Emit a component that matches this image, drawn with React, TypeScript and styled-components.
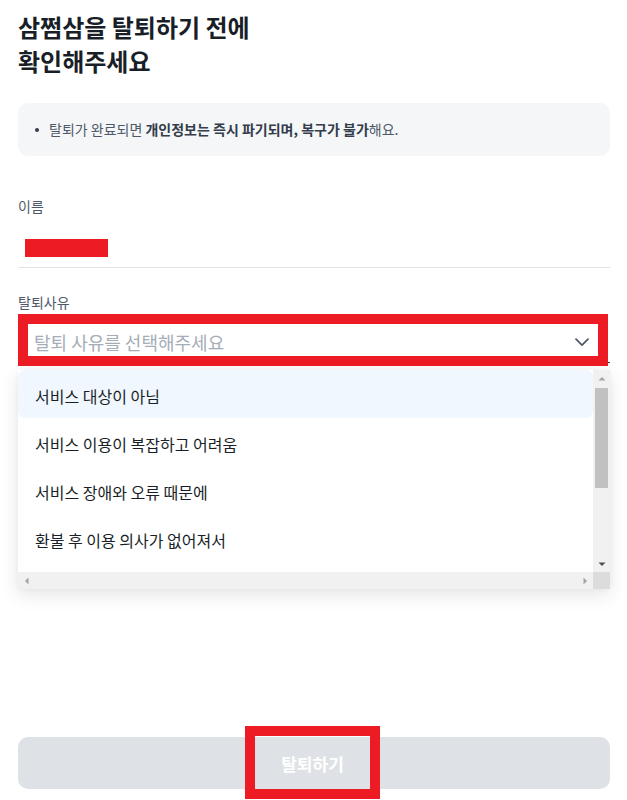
import React from "react";
import styled, { createGlobalStyle } from "styled-components";

const GlobalStyle = createGlobalStyle`
  * { box-sizing: border-box; }
  html, body { margin: 0; padding: 0; background: #ffffff; }
  body {
    font-family: "Noto Sans CJK KR", "Noto Sans", sans-serif;
    color: #191f28;
  }
`;

const Page = styled.div`
  min-height: 800px;
  display: flex;
  flex-direction: column;
  padding: 10px 17px 11px 18px;
`;

const Title = styled.h1`
  margin: 0;
  font-size: 24px;
  line-height: 34px;
  font-weight: 700;
  color: #191f28;
`;

const InfoBox = styled.div`
  margin-top: 25px;
  background: #f5f6f8;
  border-radius: 10px;
  padding: 16px 17px;
  display: flex;
  align-items: center;
  gap: 10px;
`;

const Dot = styled.span`
  width: 4px;
  height: 4px;
  border-radius: 50%;
  background: #333d4b;
  flex: none;
`;

const InfoText = styled.p`
  margin: 0;
  font-size: 14px;
  line-height: 21px;
  color: #4e5968;
  b { font-weight: 700; color: #333d4b; }
`;

const Label = styled.div<{ $gap: number }>`
  margin-top: ${(p) => p.$gap}px;
  font-size: 14px;
  line-height: 18px;
  color: #4e5968;
`;

const ValueRow = styled.div`
  margin-top: 13px;
  height: 40px;
  display: flex;
  align-items: center;
  padding-left: 7px;
  border-bottom: 1px solid #e1e3e6;
`;

const Redaction = styled.span`
  display: block;
  width: 83px;
  height: 18px;
  background: #ed1c24;
`;

const SelectField = styled.div`
  position: relative;
  margin-top: 3px;
`;

const SelectButton = styled.div`
  height: 49px;
  padding: 8px 21px 0 16px;
  display: flex;
  align-items: center;
  justify-content: space-between;
  border-bottom: 1px solid #333d4b;
`;

const Placeholder = styled.span`
  font-size: 18px;
  color: #a5adb7;
`;

const Annotation = styled.div<{ $l: number; $t: number; $w: number; $h: number }>`
  position: absolute;
  left: ${(p) => p.$l}px;
  top: ${(p) => p.$t}px;
  width: ${(p) => p.$w}px;
  height: ${(p) => p.$h}px;
  border: 10px solid #ed1c24;
  pointer-events: none;
`;

const Menu = styled.div`
  position: absolute;
  left: 0;
  right: 0;
  top: 56px;
  height: 219px;
  display: grid;
  grid-template-columns: 1fr 17px;
  grid-template-rows: 1fr 17px;
  background: #ffffff;
  box-shadow: 0 6px 18px rgba(0, 0, 0, 0.1), 0 0 6px rgba(0, 0, 0, 0.04);
  z-index: 2;
`;

const OptionList = styled.ul`
  margin: 0;
  padding: 0;
  list-style: none;
  overflow: hidden;
`;

const Option = styled.li<{ $active?: boolean }>`
  height: 48px;
  display: flex;
  align-items: center;
  padding: 3px 0 0 17px;
  font-size: 16px;
  color: #191f28;
  border-radius: 7px;
  background: ${(p) => (p.$active ? "#f1f7fe" : "transparent")};
  white-space: nowrap;
`;

const VScroll = styled.div`
  background: #f1f1f1;
  display: flex;
  flex-direction: column;
  align-items: center;
`;

const HScroll = styled.div`
  background: #f1f1f1;
  display: flex;
  align-items: center;
  justify-content: space-between;
`;

const ArrowBox = styled.div`
  width: 17px;
  height: 17px;
  flex: none;
  display: flex;
  align-items: center;
  justify-content: center;
`;

const Thumb = styled.div`
  width: 13px;
  height: 100px;
  margin-top: 1px;
  background: #c1c1c1;
`;

const VGrow = styled.div`
  flex: 1;
`;

const Corner = styled.div`
  background: #dcdcdc;
`;

const Spacer = styled.div`
  flex: 1;
`;

const ButtonWrap = styled.div`
  position: relative;
`;

const SubmitButton = styled.button`
  width: 100%;
  height: 52px;
  border: none;
  border-radius: 10px;
  background: #dee2e6;
  color: #ffffff;
  font-family: "Noto Sans CJK KR", "Noto Sans", sans-serif;
  font-size: 17px;
  font-weight: 700;
  display: flex;
  align-items: center;
  justify-content: center;
  padding: 0 3px 0 0;
`;

const Tri = ({ dir, color }: { dir: "up" | "down" | "left" | "right"; color: string }) => {
  const pts = {
    up: "0.5,4.5 7.5,4.5 4,1",
    down: "0.5,1.5 7.5,1.5 4,5",
    left: "4.5,0.5 4.5,7.5 1,4",
    right: "1.5,0.5 1.5,7.5 5,4",
  }[dir];
  const vertical = dir === "up" || dir === "down";
  return (
    <svg width={vertical ? 8 : 6} height={vertical ? 6 : 8} viewBox={vertical ? "0 0 8 6" : "0 0 6 8"}>
      <polygon points={pts} fill={color} />
    </svg>
  );
};

const reasons = [
  "서비스 대상이 아님",
  "서비스 이용이 복잡하고 어려움",
  "서비스 장애와 오류 때문에",
  "환불 후 이용 의사가 없어져서",
];

export default function App() {
  return (
    <>
      <GlobalStyle />
      <Page>
        <Title>
          삼쩜삼을 탈퇴하기 전에
          <br />
          확인해주세요
        </Title>
        <InfoBox>
          <Dot />
          <InfoText>
            탈퇴가 완료되면 <b>개인정보는 즉시 파기되며, 복구가 불가</b>해요.
          </InfoText>
        </InfoBox>

        <Label $gap={41}>이름</Label>
        <ValueRow>
          <Redaction />
        </ValueRow>

        <Label $gap={25}>탈퇴사유</Label>
        <SelectField>
          <SelectButton>
            <Placeholder>탈퇴 사유를 선택해주세요</Placeholder>
            <svg width="14" height="9" viewBox="0 0 14 9" fill="none">
              <path d="M1 1.2L7 7.2L13 1.2" stroke="#4e5968" strokeWidth="1.7" strokeLinecap="round" strokeLinejoin="round" />
            </svg>
          </SelectButton>
          <Annotation $l={0} $t={0} $w={590} $h={52} />
          <Menu>
            <OptionList>
              {reasons.map((r, i) => (
                <Option key={r} $active={i === 0}>
                  {r}
                </Option>
              ))}
            </OptionList>
            <VScroll>
              <ArrowBox>
                <Tri dir="up" color="#a3a3a3" />
              </ArrowBox>
              <Thumb />
              <VGrow />
              <ArrowBox>
                <Tri dir="down" color="#505050" />
              </ArrowBox>
            </VScroll>
            <HScroll>
              <ArrowBox>
                <Tri dir="left" color="#a3a3a3" />
              </ArrowBox>
              <ArrowBox>
                <Tri dir="right" color="#a3a3a3" />
              </ArrowBox>
            </HScroll>
            <Corner />
          </Menu>
        </SelectField>

        <Spacer />
        <ButtonWrap>
          <SubmitButton>탈퇴하기</SubmitButton>
          <Annotation $l={227} $t={-11} $w={135} $h={73} />
        </ButtonWrap>
      </Page>
    </>
  );
}
